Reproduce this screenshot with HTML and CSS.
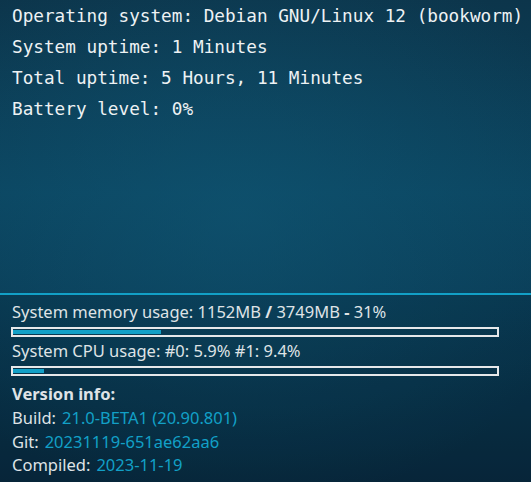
FILE: index.html
```html
<!DOCTYPE html>
<html>
<head>
<meta charset="utf-8">
<link rel="stylesheet" href="styles.css">
</head>
<body>
<div class="screen">
  <div class="top">
    <div class="line">Operating system: Debian GNU/Linux 12 (bookworm)</div>
    <div class="line">System uptime: 1 Minutes</div>
    <div class="line">Total uptime: 5 Hours, 11 Minutes</div>
    <div class="line">Battery level: 0%</div>
  </div>
  <div class="bottom">
    <div class="sep"></div>
    <div class="usage">System memory usage: 1152MB <b>/</b> 3749MB <b>-</b> 31%</div>
    <div class="bar"><div class="fill" style="width:148px"></div></div>
    <div class="usage cpu">System CPU usage: #0: 5.9% #1: 9.4%</div>
    <div class="bar"><div class="fill" style="width:31px"></div></div>
    <div class="vtitle">Version info:</div>
    <div class="kv"><span class="k">Build:</span><span class="v">21.0-BETA1 (20.90.801)</span></div>
    <div class="kv"><span class="k">Git:</span><span class="v">20231119-651ae62aa6</span></div>
    <div class="kv"><span class="k">Compiled:</span><span class="v">2023-11-19</span></div>
  </div>
</div>
</body>
</html>
```
FILE: styles.css
```css
html, body {
  margin: 0;
  padding: 0;
}
body {
  width: 531px;
  height: 482px;
  overflow: hidden;
  background: #0a3c53;
}
.screen {
  width: 531px;
  height: 482px;
  display: flex;
  flex-direction: column;
  background:
    radial-gradient(ellipse 70% 60% at 45% 45%, rgba(16, 88, 118, 0.55), rgba(16, 88, 118, 0) 100%),
    linear-gradient(180deg, #0c354b 0%, #0b4560 40%, #0a3d57 62%, #082a3f 100%);
}
.top {
  height: 293px;
  flex: none;
  box-sizing: border-box;
  padding: 1px 0 0 12px;
  font-family: "DejaVu Sans Mono", monospace;
  font-size: 17.7px;
  line-height: 31px;
  color: #eef2f4;
}
.bottom {
  flex: 1;
  display: flex;
  flex-direction: column;
  font-family: "Noto Sans", sans-serif;
  font-size: 16.5px;
  color: #dfe3e6;
  background: rgba(0, 10, 20, 0.12);
}
.sep {
  height: 2px;
  background: #12a0c7;
  margin-bottom: 6px;
}
.usage {
  padding-left: 12px;
  line-height: 22px;
}
.usage.cpu {
  margin-top: 3px;
}
.usage b {
  font-weight: 700;
}
.bar {
  margin: 4px 0 0 11px;
  width: 484px;
  height: 6px;
  border: 2px solid #e6e8ea;
  display: flex;
  align-items: center;
}
.fill {
  height: 4px;
  background: #12a0c7;
}
.vtitle {
  padding-left: 12px;
  margin-top: 6px;
  font-weight: 700;
  line-height: 24px;
}
.kv {
  padding-left: 12px;
  display: flex;
  gap: 6px;
  line-height: 23.5px;
}
.v {
  color: #12a0c7;
}
```
